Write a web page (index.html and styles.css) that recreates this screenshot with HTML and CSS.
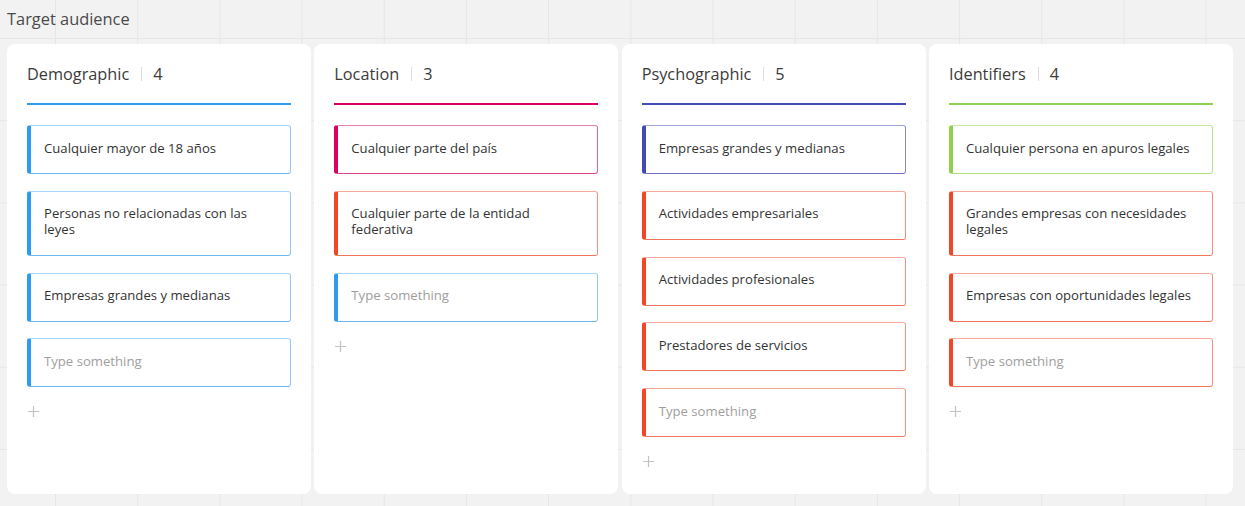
FILE: index.html
```html
<!DOCTYPE html>
<html lang="es">
<head>
<meta charset="utf-8">
<title>Target audience</title>
<link rel="stylesheet" href="styles.css">
</head>
<body>
<div class="board">
  <h1 class="board-title">Target audience</h1>
  <div class="columns">
    <section class="column">
      <header class="col-head"><span class="col-name">Demographic</span><span class="sep"></span><span class="col-count">4</span></header>
      <div class="divider blue"></div>
      <div class="cards">
        <div class="card blue">Cualquier mayor de 18 años</div>
        <div class="card blue">Personas no relacionadas con las leyes</div>
        <div class="card blue">Empresas grandes y medianas</div>
        <div class="card blue placeholder">Type something</div>
      </div>
      <div class="add"><svg width="11" height="11" viewBox="0 0 11 11"><path d="M5.5 0v11M0 5.5h11" stroke="#c2c2c2" stroke-width="1.2" fill="none"/></svg></div>
    </section>
    <section class="column">
      <header class="col-head"><span class="col-name">Location</span><span class="sep"></span><span class="col-count">3</span></header>
      <div class="divider magenta"></div>
      <div class="cards">
        <div class="card magenta">Cualquier parte del país</div>
        <div class="card orange">Cualquier parte de la entidad federativa</div>
        <div class="card blue placeholder">Type something</div>
      </div>
      <div class="add"><svg width="11" height="11" viewBox="0 0 11 11"><path d="M5.5 0v11M0 5.5h11" stroke="#c2c2c2" stroke-width="1.2" fill="none"/></svg></div>
    </section>
    <section class="column">
      <header class="col-head"><span class="col-name">Psychographic</span><span class="sep"></span><span class="col-count">5</span></header>
      <div class="divider indigo"></div>
      <div class="cards">
        <div class="card indigo">Empresas grandes y medianas</div>
        <div class="card orange">Actividades empresariales</div>
        <div class="card orange">Actividades profesionales</div>
        <div class="card orange">Prestadores de servicios</div>
        <div class="card orange placeholder">Type something</div>
      </div>
      <div class="add"><svg width="11" height="11" viewBox="0 0 11 11"><path d="M5.5 0v11M0 5.5h11" stroke="#c2c2c2" stroke-width="1.2" fill="none"/></svg></div>
    </section>
    <section class="column">
      <header class="col-head"><span class="col-name">Identifiers</span><span class="sep"></span><span class="col-count">4</span></header>
      <div class="divider green"></div>
      <div class="cards">
        <div class="card green">Cualquier persona en apuros legales</div>
        <div class="card orange">Grandes empresas con necesidades legales</div>
        <div class="card orange">Empresas con oportunidades legales</div>
        <div class="card orange placeholder">Type something</div>
      </div>
      <div class="add"><svg width="11" height="11" viewBox="0 0 11 11"><path d="M5.5 0v11M0 5.5h11" stroke="#c2c2c2" stroke-width="1.2" fill="none"/></svg></div>
    </section>
  </div>
</div>
</body>
</html>
```

FILE: styles.css
```css
html, body {
  margin: 0;
  padding: 0;
}
body {
  width: 1245px;
  height: 506px;
  overflow: hidden;
  font-family: "Open Sans", "Noto Sans", sans-serif;
  color: #333333;
  background-color: #f2f2f2;
  background-image:
    linear-gradient(to right, #e6e6e6 1px, transparent 1px),
    linear-gradient(to bottom, #e6e6e6 1px, transparent 1px);
  background-size: 82.2px 82.2px;
  background-position: 55px 38px;
}
.board {
  padding: 0 12px 0 7px;
}
.board-title {
  margin: 0;
  height: 44px;
  padding-top: 7px;
  box-sizing: border-box;
  font-size: 16.4px;
  line-height: 24px;
  font-weight: 400;
  color: #4a4a4a;
}
.columns {
  display: flex;
  gap: 3.33px;
}
.column {
  width: 304px;
  height: 450px;
  box-sizing: border-box;
  background: #ffffff;
  border-radius: 8px;
  padding: 18px 20px 20px 20px;
  display: flex;
  flex-direction: column;
}
.col-head {
  display: flex;
  align-items: center;
  height: 24px;
  font-size: 16.3px;
  line-height: 24px;
  color: #3b3b3b;
}
.sep {
  width: 1px;
  height: 14px;
  background: #dcdcdc;
  margin: 0 11px 0 12px;
}
.divider {
  height: 2px;
  margin-top: 17px;
  margin-bottom: 20px;
}
.divider.blue { background: #2d9bf0; }
.divider.magenta { background: #da0063; }
.divider.indigo { background: #414bb2; }
.divider.green { background: #8fd14f; }
.cards {
  display: flex;
  flex-direction: column;
  gap: 16.75px;
}
.card {
  border-style: solid;
  border-width: 1px 1px 1px 4px;
  border-radius: 3px;
  padding: 13.5px 16px 17.5px 13px;
  font-size: 13.15px;
  line-height: 16px;
  color: #333333;
}
.card.placeholder {
  color: #9e9e9e;
}
.card.blue {
  border-color: #a6d4fa #8fc8f7 #6ab6f3 #2d9bf0;
}
.card.magenta {
  border-color: #ec80b1 #e6629f #e0448c #da0063;
}
.card.orange {
  border-color: #f9ab9b #f7917b #f5755a #f24726;
}
.card.indigo {
  border-color: #9ea3d9 #8489cf #6a71c5 #414bb2;
}
.card.green {
  border-color: #c5e8a5 #b8e391 #addf80 #8fd14f;
}
.add {
  margin-top: 19px;
  padding-left: 1px;
  height: 11px;
  line-height: 0;
}
```
